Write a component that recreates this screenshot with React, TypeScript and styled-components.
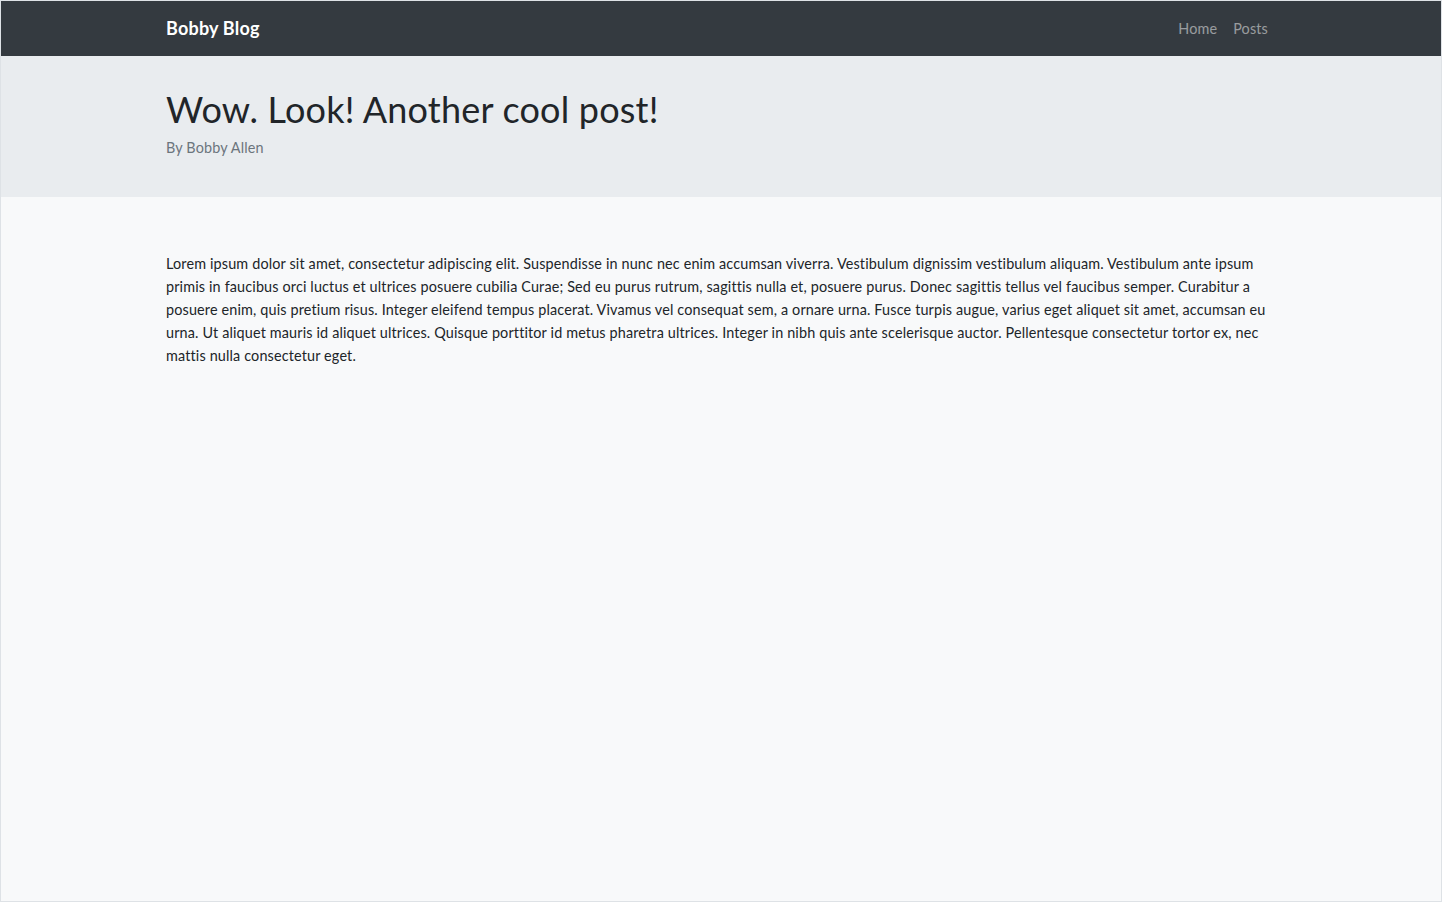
import React from "react";
import styled, { createGlobalStyle } from "styled-components";

const GlobalStyle = createGlobalStyle`
  html, body { margin: 0; padding: 0; }
  body {
    font-family: Lato, "Noto Sans", sans-serif;
    font-size: 14.4px;
    line-height: 1.6;
    color: #212529;
    background: #ffffff;
  }
  * { box-sizing: border-box; }
`;

const Page = styled.div`
  min-height: 100vh;
  border: 1px solid #dee2e6;
  background: #f8f9fa;
  display: flex;
  flex-direction: column;
`;

const Container = styled.div`
  width: 1140px;
  margin: 0 auto;
  padding: 0 15px;
`;

const NavBar = styled.nav`
  background: #343a40;
  height: 55px;
  display: flex;
  align-items: center;
`;

const NavInner = styled(Container)`
  display: flex;
  align-items: center;
  justify-content: space-between;
`;

const Brand = styled.a`
  color: #ffffff;
  font-size: 18px;
  font-weight: 700;
  letter-spacing: 0.2px;
  text-decoration: none;
  line-height: 1;
`;

const NavLinks = styled.ul`
  list-style: none;
  margin: 0;
  padding: 0;
  display: flex;
`;

const NavLink = styled.a`
  display: block;
  padding: 8px;
  color: rgba(255, 255, 255, 0.5);
  text-decoration: none;
  font-size: 14.4px;
  letter-spacing: 0.15px;
`;

const Jumbo = styled.header`
  background: #e9ecef;
  padding: 32px 0 38px;
`;

const Title = styled.h1`
  margin: 0 0 5px;
  font-size: 36px;
  font-weight: 400;
  line-height: 1.2;
  letter-spacing: 0.2px;
  color: #212529;
`;

const Byline = styled.p`
  margin: 0;
  color: #6c757d;
  letter-spacing: 0.15px;
`;

const Main = styled.main`
  padding-top: 55px;
`;

const Body = styled.p`
  margin: 0;
  letter-spacing: 0.15px;
`;

export default function App() {
  return (
    <>
      <GlobalStyle />
      <Page>
        <NavBar>
          <NavInner>
            <Brand href="#">Bobby Blog</Brand>
            <NavLinks>
              <li><NavLink href="#">Home</NavLink></li>
              <li><NavLink href="#">Posts</NavLink></li>
            </NavLinks>
          </NavInner>
        </NavBar>
        <Jumbo>
          <Container>
            <Title>Wow. Look! Another cool post!</Title>
            <Byline>By Bobby Allen</Byline>
          </Container>
        </Jumbo>
        <Main>
          <Container>
            <Body>
              Lorem ipsum dolor sit amet, consectetur adipiscing elit. Suspendisse in nunc nec enim accumsan viverra. Vestibulum dignissim vestibulum aliquam. Vestibulum ante ipsum primis in faucibus orci luctus et ultrices posuere cubilia Curae; Sed eu purus rutrum, sagittis nulla et, posuere purus. Donec sagittis tellus vel faucibus semper. Curabitur a posuere enim, quis pretium risus. Integer eleifend tempus placerat. Vivamus vel consequat sem, a ornare urna. Fusce turpis augue, varius eget aliquet sit amet, accumsan eu urna. Ut aliquet mauris id aliquet ultrices. Quisque porttitor id metus pharetra ultrices. Integer in nibh quis ante scelerisque auctor. Pellentesque consectetur tortor ex, nec mattis nulla consectetur eget.
            </Body>
          </Container>
        </Main>
      </Page>
    </>
  );
}
